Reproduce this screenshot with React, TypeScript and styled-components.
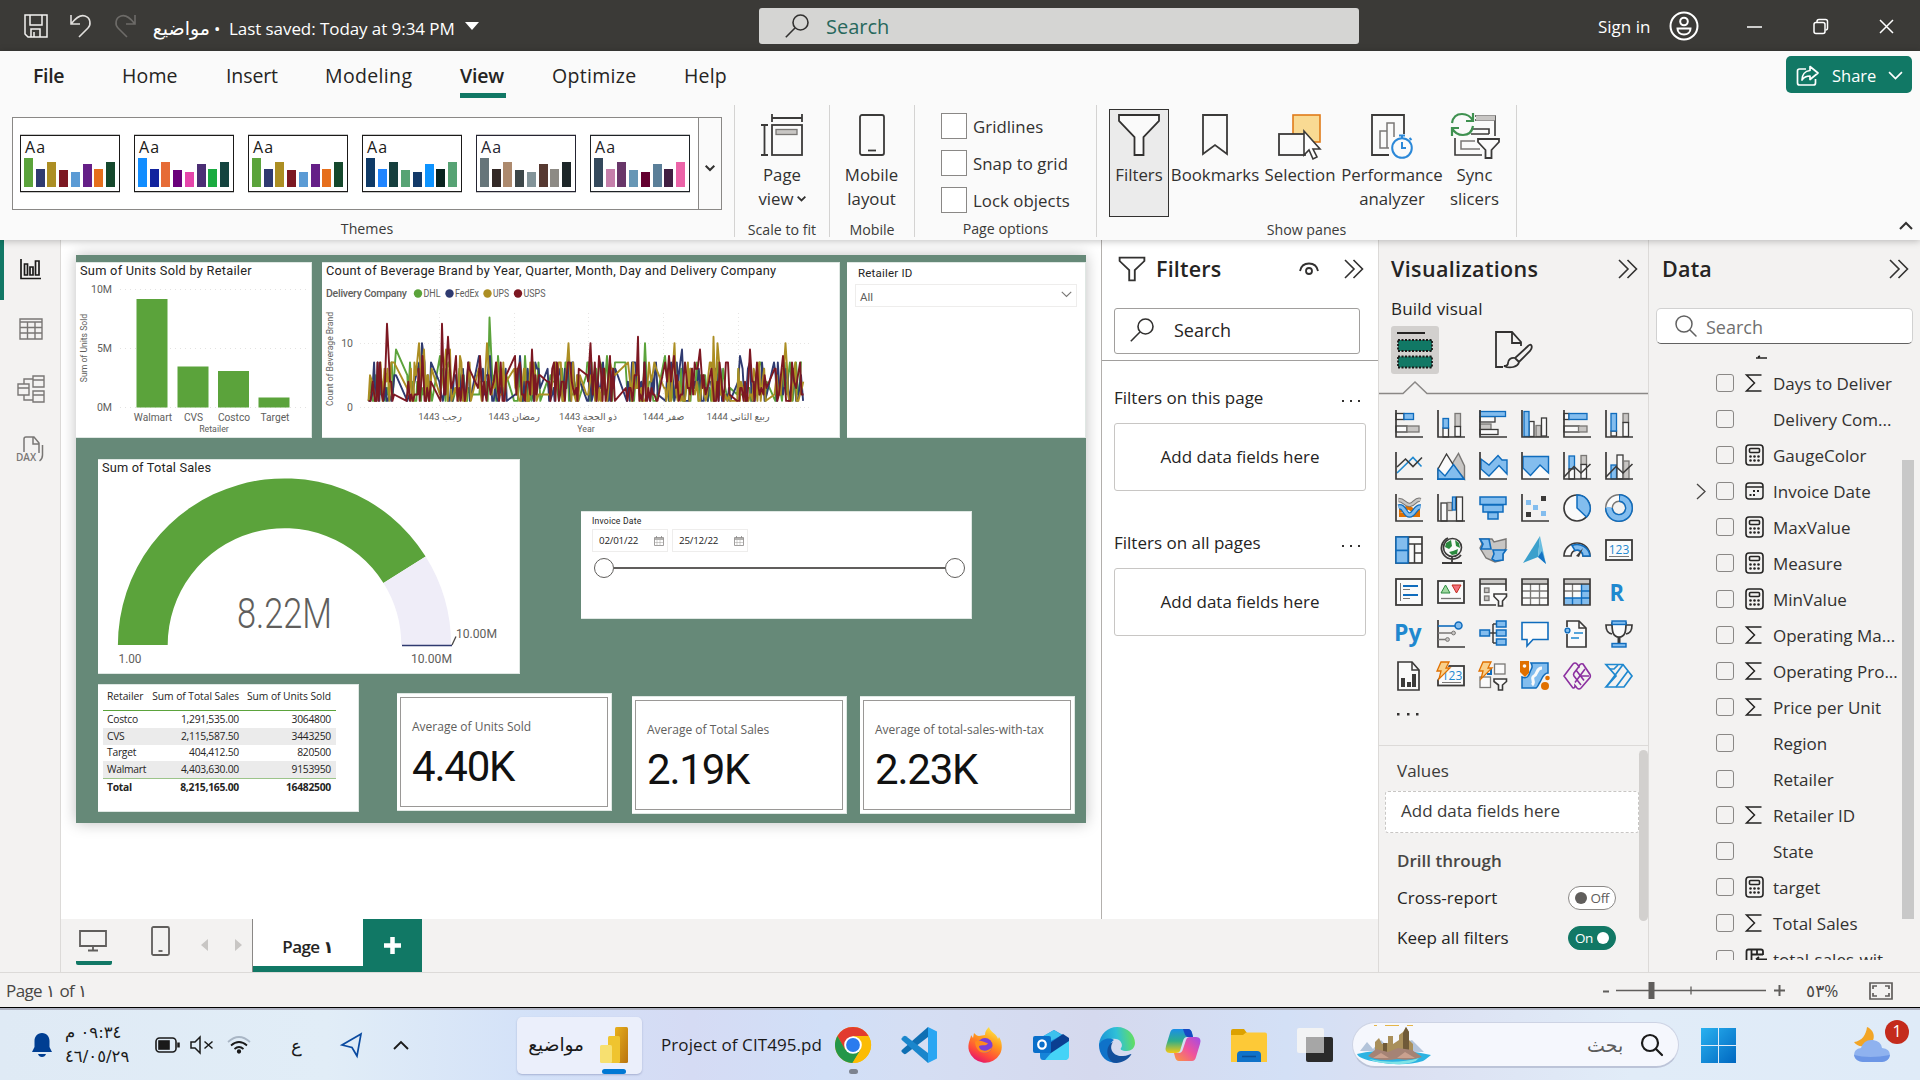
import React from "react";
import styled, { createGlobalStyle } from "styled-components";

const UI = '"Open Sans", "Noto Sans", "DejaVu Sans", sans-serif';
const DIN = 'Roboto, "DejaVu Sans", sans-serif';
const TEAL = "#117865";

const Global = createGlobalStyle`
  * { box-sizing: border-box; }
  body { margin: 0; overflow: hidden; font-family: ${UI}; color: #252423; }
  svg { display: block; flex: none; overflow: visible; }
`;

const Screen = styled.div`
  width: 1920px;
  height: 1080px;
  display: flex;
  flex-direction: column;
  overflow: hidden;
  background: #f3f2f1;
`;

const Label = styled.span<{ $size?: number; $ls?: number; $weight?: number; $color?: string; $w?: number; $ml?: number; $dy?: number }>`
  display: block;
  flex: none;
  white-space: nowrap;
  font-size: ${p => p.$size ?? 17}px;
  line-height: 24px;
  letter-spacing: ${p => p.$ls ?? 0}px;
  font-weight: ${p => p.$weight ?? 400};
  color: ${p => p.$color ?? "inherit"};
  margin-left: ${p => p.$ml ?? 0}px;
  padding-top: ${p => Math.max(0, p.$dy ?? 0)}px;
  width: ${p => (p.$w ? `${p.$w}px` : "auto")};
`;

/* ---------- title bar ---------- */
const TitleBar = styled.header`
  height: 51px;
  flex: none;
  display: flex;
  align-items: center;
  background: #3b3a37;
  color: #fff;
  padding-left: 24px;
`;
const QuickIcons = styled.div`
  display: flex;
  gap: 22px;
  width: 126px;
`;
const TitleSearch = styled.div`
  width: 600px;
  height: 36px;
  margin-left: 280px;
  border-radius: 3px;
  background: #d5d5d3;
  display: flex;
  align-items: center;
  padding-left: 26px;
  gap: 17px;
  color: #27685c;
`;
const WindowButtons = styled.div`
  display: flex;
  align-items: center;
  gap: 51px;
  margin-left: 48px;
`;

/* ---------- ribbon ---------- */
const Ribbon = styled.section`
  height: 189px;
  flex: none;
  background: #fafafa;
  display: flex;
  flex-direction: column;
  box-shadow: 0 1px 7px rgba(0, 0, 0, 0.25);
  z-index: 2;
`;
const TabRow = styled.nav`
  height: 54px;
  display: flex;
  align-items: flex-start;
  padding: 5px 8px 0 33px;
`;
const Tab = styled.div<{ $w: number; $gap: number; $active?: boolean; $bold?: boolean; $ls?: number }>`
  width: ${p => p.$w}px;
  margin-right: ${p => p.$gap}px;
  height: 42px;
  padding-top: 7px;
  white-space: nowrap;
  font-size: 19.5px;
  line-height: 26px;
  letter-spacing: ${p => p.$ls ?? 0.15}px;
  font-weight: ${p => (p.$active || p.$bold ? 600 : 400)};
  border-bottom: 5px solid ${p => (p.$active ? TEAL : "transparent")};
`;
const Share = styled.button`
  margin-left: auto;
  width: 126px;
  height: 37px;
  border: 0;
  border-radius: 5px;
  background: ${TEAL};
  color: #fff;
  display: flex;
  align-items: center;
  padding: 2px 12px 0 10px;
  font: 400 16.5px ${UI};
  gap: 12px;
`;
const Groups = styled.div`
  display: flex;
  height: 132px;
`;
const Group = styled.div<{ $w: number }>`
  width: ${p => p.$w}px;
  flex: none;
  border-right: 1px solid #d4d3d2;
  display: flex;
  flex-direction: column;
`;
const GroupBody = styled.div<{ $pad?: string }>`
  height: 112px;
  display: flex;
  padding: ${p => p.$pad ?? "4px 0 0"};
`;
const GroupName = styled.div`
  text-align: center;
  font-size: 14.2px;
  line-height: 20px;
  height: 20px;
  margin-top: 1px;
  color: #3b3a39;
  padding-top: 2px;
`;
const Gallery = styled.div`
  width: 710px;
  height: 93px;
  border: 1px solid #8a8886;
  background: #fff;
  display: flex;
  align-items: center;
  padding-left: 7px;
  gap: 14px;
`;
const ThemeCard = styled.div<{ $ink: string }>`
  width: 100px;
  height: 57px;
  border: 1.5px solid ${p => p.$ink};
  box-shadow: 0 1px 0 #c8c8c8, 0 -1px 0 #c8c8c8;
  background: #fff;
  color: ${p => p.$ink};
  padding: 3px 4px 4px;
  display: flex;
  flex-direction: column;
  justify-content: space-between;
  font-size: 16px;
  line-height: 16px;
  letter-spacing: 1.2px;
`;
const MiniBars = styled.div`
  display: flex;
  align-items: flex-end;
  gap: 2.8px;
  margin-left: -1px;
`;
const MiniBar = styled.i<{ $h: number; $c: string }>`
  width: 9px;
  height: ${p => p.$h}px;
  background: ${p => p.$c};
`;
const GalleryMore = styled.div`
  margin-left: -6px;
  width: 24px;
  height: 91px;
  border-left: 1px solid #8a8886;
  background: #fafafa;
  display: flex;
  align-items: center;
  justify-content: center;
  padding-top: 8px;
`;
const BigButton = styled.div<{ $w: number; $active?: boolean }>`
  width: ${p => p.$w}px;
  height: 108px;
  flex: none;
  border: 1px solid ${p => (p.$active ? "#323130" : "transparent")};
  background: ${p => (p.$active ? "#ebebeb" : "transparent")};
  display: flex;
  flex-direction: column;
  align-items: center;
  white-space: nowrap;
  font-size: 16.8px;
  line-height: 24px;
  color: #323130;
  padding-top: 4px;
  > svg { margin-bottom: 7px; }
`;
const CheckList = styled.div`
  display: flex;
  flex-direction: column;
  gap: 13px;
  padding: 5px 0 0 26px;
`;
const CheckRow = styled.div`
  display: flex;
  align-items: center;
  gap: 6px;
  height: 24px;
  font-size: 16.8px;
  letter-spacing: 0.05px;
  white-space: nowrap;
  color: #323130;
  &::before { content: ""; width: 24px; height: 24px; border: 1px solid #8a8886; background: #fff; }
`;
const CollapseSlot = styled.div`
  flex: 1;
  display: flex;
  justify-content: flex-end;
  align-items: flex-end;
  padding: 0 7px 7px 0;
`;

/* ---------- workspace ---------- */
const Work = styled.main`
  height: 732px;
  flex: none;
  display: flex;
`;
const Rail = styled.aside`
  width: 61px;
  flex: none;
  border-right: 1px solid #dcdad8;
  background: #f3f2f1;
`;
const RailItem = styled.div<{ $active?: boolean }>`
  height: 60px;
  display: flex;
  align-items: center;
  justify-content: center;
  border-left: 4px solid ${p => (p.$active ? TEAL : "transparent")};
  padding: 0 3px 2px 0;
`;
const Center = styled.div`
  width: 1317px;
  flex: none;
  display: flex;
  flex-direction: column;
`;
const CenterTop = styled.div`
  height: 679px;
  display: flex;
`;
const Canvas = styled.div`
  width: 1040px;
  background: #fff;
  padding: 15px 0 0 15px;
`;
const Report = styled.div`
  position: relative;
  width: 1010px;
  height: 568px;
  background: #668978;
  box-shadow: 0 0 14px rgba(0, 0, 0, 0.25);
`;
const Visual = styled.div<{ $x: number; $y: number; $w: number; $h: number }>`
  position: absolute;
  left: ${p => p.$x - 76}px;
  top: ${p => p.$y - 255}px;
  width: ${p => p.$w}px;
  height: ${p => p.$h}px;
  background: #fff;
  overflow: hidden;
  border: 1px solid #dfe7e3;
  border-width: 1px 1px 1px 0;
`;
const VisualTitle = styled.div<{ $ls?: number }>`
  font: 400 12.8px/16px ${DIN};
  letter-spacing: ${p => p.$ls ?? 0.25}px;
  white-space: nowrap;
  height: 16px;
  padding-left: 4px;
`;
const SlicerBody = styled.div`
  padding: 2px 8px 0 8px;
`;
const SlicerTitle = styled.div<{ $size: number; $h: number }>`
  font: 400 ${p => p.$size}px/${p => p.$h}px ${DIN};
  letter-spacing: 0.2px;
  padding-left: 3px;
  white-space: nowrap;
`;
const Dropdown = styled.div`
  height: 23px;
  margin-top: 3px;
  border: 1px solid #eeedec;
  display: flex;
  align-items: center;
  justify-content: space-between;
  padding: 3px 4px 0 4px;
  font: 400 11.5px ${DIN};
  color: #605e5c;
  > svg { margin-top: -5px; }
`;
const DateRow = styled.div`
  display: flex;
  gap: 4px;
  padding-left: 3px;
`;
const DateBox = styled.div`
  width: 76px;
  height: 23px;
  border: 1px solid #eeedec;
  display: flex;
  align-items: center;
  justify-content: space-between;
  padding: 0 3px 0 6px;
  font: 400 9.8px "Open Sans", sans-serif;
  letter-spacing: -0.2px;
`;
const Slider = styled.div`
  display: flex;
  align-items: center;
  margin: 5px -2px 0 5px;
  height: 22px;
`;
const Knob = styled.i`
  width: 20px;
  height: 20px;
  border: 1.5px solid #605e5c;
  border-radius: 50%;
`;
const Track = styled.i`
  flex: 1;
  height: 2px;
  background: #605e5c;
`;
const Table = styled.div`
  padding: 0 0 0 5px;
  width: 238px;
`;
const TRow = styled.div<{ $kind?: "head" | "alt" | "total" }>`
  display: grid;
  grid-template-columns: 46px 94px 92px;
  height: ${p => (p.$kind === "head" ? 26 : 16.8)}px;
  padding-bottom: ${p => (p.$kind === "head" ? 3 : 1)}px;
  align-items: center;
  background: ${p => (p.$kind === "alt" ? "#ebebeb" : "transparent")};
  border-bottom: ${p => (p.$kind === "head" ? "1px solid #5ba33b" : "0")};
  border-top: ${p => (p.$kind === "total" ? "1px solid #9cc48a" : "0")};
  font-size: 10.3px;
  letter-spacing: ${p => (p.$kind === "head" ? -0.05 : -0.25)}px;
  font-weight: ${p => (p.$kind === "total" ? 700 : 400)};
  color: #252423;
  white-space: nowrap;
  span:first-child { padding-left: 4px; text-align: left; }
  span { text-align: right; padding-right: 4px; }
`;
const CardFrame = styled.div`
  margin: 3px;
  height: calc(100% - 6px);
  border: 1px solid #9a9896;
  padding: 19px 0 0 11px;
`;
const CardLabel = styled.div`
  font-size: 12px;
  line-height: 20px;
  color: #605e5c;
  white-space: nowrap;
`;
const CardValue = styled.div`
  font: 400 42px/48px ${DIN};
  letter-spacing: -1.2px;
  color: #111;
  margin-top: 6px;
  white-space: nowrap;
`;

/* filters pane */
const FiltersPane = styled.section`
  width: 277px;
  flex: none;
  background: #fff;
  border-left: 1px solid #b3b0ad;
`;
const PaneHead = styled.div<{ $pad: string }>`
  height: 60px;
  display: flex;
  align-items: center;
  padding: ${p => p.$pad};
`;
const Push = styled.div`
  margin-left: auto;
  display: flex;
  align-items: center;
  gap: 25px;
`;
const FilterTop = styled.div`
  height: 61px;
  padding: 8px 0 0 12px;
  border-bottom: 1px solid #a19f9d;
`;
const FilterSearch = styled.div`
  width: 246px;
  height: 46px;
  border: 1px solid #a19f9d;
  border-radius: 3px;
  display: flex;
  align-items: center;
  padding: 0 0 2px 15px;
  gap: 20px;
`;
const FilterSection = styled.div`
  height: 145px;
  padding: 23px 12px 0 12px;
`;
const FilterHead = styled.div`
  display: flex;
  justify-content: space-between;
  align-items: center;
  height: 27px;
  padding-right: 6px;
`;
const DropWell = styled.div`
  margin-top: 12px;
  height: 68px;
  border: 1px solid #c8c6c4;
  border-radius: 3px;
  display: flex;
  align-items: center;
  justify-content: center;
`;

/* page tabs */
const PageBar = styled.div`
  height: 53px;
  display: flex;
  background: #f3f2f1;
`;
const ViewSwitch = styled.div`
  width: 192px;
  display: flex;
  align-items: flex-start;
  border-right: 1px solid #8a8886;
  padding-left: 15px;
`;
const DesktopTab = styled.div`
  width: 36px;
  height: 46px;
  padding: 11px 0 0 3px;
  border-bottom: 4px solid ${TEAL};
  border-radius: 2px;
`;
const PageTab = styled.div`
  width: 110px;
  background: #fff;
  border-bottom: 6px solid ${TEAL};
  display: flex;
  align-items: center;
  justify-content: center;
  font-size: 17px;
  font-weight: 600;
  letter-spacing: -0.6px;
  padding-top: 7px;
`;
const AddPage = styled.div`
  width: 59px;
  background: ${TEAL};
  display: flex;
  align-items: center;
  justify-content: center;
`;

/* visualizations pane */
const VizPane = styled.section`
  width: 271px;
  flex: none;
  background: #f3f2f1;
  border-left: 1px solid #dcdad8;
  border-right: 1px solid #dcdad8;
  display: flex;
  flex-direction: column;
`;
const BuildTitle = styled.div`
  height: 24px;
  margin: -3px 0 3px 12px;
  font-size: 17px;
  line-height: 24px;
  letter-spacing: 0.15px;
  font-weight: 500;
`;
const BuildRow = styled.div`
  display: flex;
  padding: 0 0 0 12px;
  height: 55px;
  margin-top: 2px;
  align-items: flex-start;
`;
const BuildButton = styled.div`
  width: 48px;
  height: 48px;
  border-radius: 3px;
  background: #d2d0ce;
  margin-right: 56px;
  padding: 6px;
`;
const IconGrid = styled.div`
  display: grid;
  grid-template-columns: repeat(6, 28px);
  grid-auto-rows: 28px;
  gap: 14px;
  padding: 15px 0 0 16px;
`;
const Wells = styled.div`
  display: flex;
  margin-top: auto;
  height: 227px;
  border-top: 1px solid #dcdad8;
`;
const WellsBody = styled.div`
  width: 260px;
  padding: 13px 0 0 6px;
`;
const ValueDrop = styled.div`
  width: 254px;
  height: 42px;
  margin-top: 8px;
  background: #fff;
  border: 1px dashed #c8c6c4;
  border-radius: 3px;
  display: flex;
  align-items: center;
  padding: 0 0 2px 15px;
`;
const OptionRow = styled.div<{ $mt?: number }>`
  display: flex;
  align-items: center;
  justify-content: space-between;
  height: 40px;
  margin-top: ${p => p.$mt ?? 0}px;
  padding: 0 23px 0 12px;
`;
const Toggle = styled.div<{ $on?: boolean }>`
  width: 48px;
  height: 24px;
  border-radius: 12px;
  border: 1px solid ${p => (p.$on ? TEAL : "#8a8886")};
  background: ${p => (p.$on ? TEAL : "#fff")};
  color: ${p => (p.$on ? "#fff" : "#605e5c")};
  display: flex;
  flex-direction: ${p => (p.$on ? "row-reverse" : "row")};
  align-items: center;
  justify-content: space-between;
  padding: 0 6px;
  font-size: 13.5px;
  letter-spacing: -0.4px;
  i { width: 12px; height: 12px; border-radius: 50%; background: ${p => (p.$on ? "#fff" : "#605e5c")}; }
`;
const Scroll = styled.i<{ $w: number; $h: number; $top: number; $round?: boolean; $c: string }>`
  flex: none;
  width: ${p => p.$w}px;
  height: ${p => p.$h}px;
  margin-top: ${p => p.$top}px;
  border-radius: ${p => (p.$round ? 5 : 0)}px;
  background: ${p => p.$c};
`;

/* data pane */
const DataPane = styled.section`
  flex: 1;
  background: #f3f2f1;
`;
const DataSearch = styled.div`
  width: 257px;
  height: 36px;
  margin: 8px 0 0 7px;
  border: 1px solid #d1d1d1;
  border-bottom: 1.5px solid #616161;
  border-radius: 5px;
  background: #fff;
  display: flex;
  align-items: center;
  padding-left: 18px;
  gap: 9px;
`;
const FieldArea = styled.div`
  display: flex;
  margin-top: 11px;
  height: 605px;
  overflow: hidden;
`;
const FieldList = styled.div`
  width: 253px;
  overflow: hidden;
`;
const Remnant = styled.div`
  height: 10px;
  padding: 0 0 0 107px;
`;
const Field = styled.div`
  height: 36px;
  display: grid;
  grid-template-columns: 20px 18px 20px 1fr;
  column-gap: 10px;
  padding-left: 37px;
  align-items: center;
  font-size: 17px;
  white-space: nowrap;
  color: #323130;
  span:last-child { margin-left: -1px; }
  svg { margin-left: 1px; }
`;
const Box = styled.i`
  width: 18px;
  height: 18px;
  border: 1px solid #8a8886;
  border-radius: 3px;
`;
const Expander = styled.div`
  padding-left: 9px;
`;

/* status bar */
const Status = styled.footer`
  height: 38px;
  flex: none;
  display: flex;
  align-items: center;
  background: #f3f2f1;
  border-top: 1px solid #dcdad8;
  border-bottom: 2px solid #aeb3c2;
  box-shadow: inset 0 -1px 0 #000;
  padding: 0 27px 0 6px;
  color: #484644;
`;
const ZoomGroup = styled.div`
  margin-left: auto;
  display: flex;
  align-items: center;
  gap: 20px;
`;

/* taskbar */
const Taskbar = styled.footer`
  height: 70px;
  flex: none;
  display: flex;
  align-items: center;
  background: linear-gradient(90deg, #dfeaf5 0, #e1edf7 17%, #d3e1f8 28%, #d5dbf4 36%, #d1dff7 43%, #d5def3 48%, #d5d9ee 57%, #d3e0f6 67%, #dbe0f2 73%, #e1ecf8 85%, #dfebf8 100%);
  color: #1a1a1a;
`;
const Slot = styled.div<{ $w: number; $pl?: number; $clip?: boolean }>`
  width: ${p => p.$w}px;
  padding-left: ${p => p.$pl ?? 0}px;
  overflow: ${p => (p.$clip ? "hidden" : "visible")};
  flex: none;
  display: flex;
  align-items: center;
`;
const ViewLine = styled.div`
  display: flex;
  align-items: center;
  gap: 3px;
  height: 24px;
`;
const Clock = styled.div`
  width: 66px;
  direction: rtl;
  text-align: left;
  font: 400 16.5px/24px "DejaVu Sans", sans-serif;
  white-space: nowrap;
  letter-spacing: -0.5px;
  div { display: flex; justify-content: flex-end; }
`;
const AppButton = styled.div`
  width: 125px;
  height: 57px;
  border-radius: 5px;
  background: #ebeffb;
  box-shadow: 0 1px 2px rgba(80, 90, 140, 0.35);
  display: flex;
  align-items: flex-start;
  padding: 10px 14px 0 9px;
  justify-content: space-between;
`;
const AppMark = styled.div<{ $c: string; $w: number; $t: number; $mt?: number }>`
  display: flex;
  flex-direction: column;
  align-items: center;
  margin-top: ${p => p.$mt ?? 0}px;
  &::after { content: ""; width: ${p => p.$w}px; height: 5px; margin-top: ${p => p.$t}px; border-radius: 3px; background: ${p => p.$c}; }
`;
const SearchPill = styled.div`
  width: 327px;
  height: 46px;
  margin-left: -1px;
  border-radius: 23px;
  background: #f5f7fd;
  border: 1px solid #cdd3e4;
  border-bottom: 2px solid #bcc4d8;
  display: flex;
  align-items: center;
  padding: 0 16px 0 4px;
`;
const Badge = styled.div`
  position: absolute;
  right: -19px;
  top: -7px;
  width: 24px;
  height: 24px;
  border-radius: 50%;
  background: #c42b1c;
  color: #fff;
  font-size: 16px;
  line-height: 23px;
  text-align: center;
`;
const Weather = styled.div`
  position: relative;
  width: 36px;
`;

/* ---------- small icons ---------- */
const Magnifier = ({ c = "#323130", s = 24, w = 1.6 }: { c?: string; s?: number; w?: number }) => (
  <svg width={s} height={s} viewBox="0 0 24 24" fill="none" stroke={c} strokeWidth={w}>
    <circle cx="15.5" cy="8.5" r="7.5" /><path d="M10 14L.8 23.2" />
  </svg>
);
const MagnifierR = ({ c, s, w }: { c: string; s: number; w: number }) => (
  <svg width={s} height={s} viewBox="0 0 22 22" fill="none" stroke={c} strokeWidth={w} strokeLinecap="round">
    <circle cx="9" cy="9" r="8" /><path d="M15 15l6 6" />
  </svg>
);
const DoubleChevron = () => (
  <svg width="20" height="20" viewBox="0 0 20 20" fill="none" stroke="#323130" strokeWidth="1.6"><path d="M1 1l9 9-9 9M9.500 1l9 9-9 9" /></svg>
);
const Funnel = ({ w, h, sw, fill = "none" }: { w: number; h: number; sw: number; fill?: string }) => (
  <svg width={w} height={h} viewBox="0 0 42 42" preserveAspectRatio="none" fill={fill} stroke="#323130" strokeWidth={sw}>
    <path d="M1 1H41V7L25.500 23V41H16.500V23L1 7Z" />
  </svg>
);
const Down = ({ s = 10, c = "#323130", w = 2 }: { s?: number; c?: string; w?: number }) => (
  <svg width={s} height={s * 0.6} viewBox="0 0 10 6" fill="none" stroke={c} strokeWidth={w}><path d="M.7.7L5 5 9.300.7" /></svg>
);

/* ---------- visual type icons, 28 x 28 ---------- */
const B = "#83bdee", b = "#0f6cbd", K = "#3b3a39", G = "#c8c6c4", g = "#797775", W = "#fafafa", P = "#1f88cf", O = "#e07000";
const Axis = () => <path d="M1 0V27H28" fill="none" stroke={K} strokeWidth="1.7" />;
type Bx = [string, number, number, number, number];
const tone: Record<string, [string, string]> = { b: [B, b], w: [W, K], g: [G, g], o: ["#f9d08b", O], v: [W, g] };
const Boxes = ({ d, sw = 1.3 }: { d: Bx[]; sw?: number }) => (
  <>{d.map(([t, x, y, w, h], i) => <rect key={i} x={x} y={y} width={w} height={h} fill={tone[t][0]} stroke={tone[t][1]} strokeWidth={sw} />)}</>
);
const Bolt = () => <path d="M4 0h8L9 6h4L2 17l2-8H0z" fill="#f9d08b" stroke={O} strokeWidth="1.3" />;

const vizIcons: React.ReactNode[] = [
  <><Boxes d={[["w", 1, 3.5, 8, 6], ["b", 9, 3.5, 9.5, 6], ["w", 1, 16, 11, 6], ["g", 12, 16, 12, 6]]} /><Axis /></>,
  <><Boxes d={[["w", 6, 18, 5.500, 9], ["b", 6, 8.500, 5.500, 9.500], ["g", 18, 3.500, 5.500, 13], ["w", 18, 16.500, 5.500, 10]]} /><Axis /></>,
  <><Boxes d={[["w", 1, 6.500, 15, 5.500], ["g", 1, 14, 11, 5.500], ["w", 1, 19.500, 18, 5], ["b", 1, 1.500, 25.500, 5]]} /><Axis /></>,
  <><Boxes d={[["w", 8, 11.500, 5, 15], ["g", 15, 15.500, 5, 11], ["w", 20.500, 8, 5, 18], ["b", 3, 1.500, 5, 25]]} /><Axis /></>,
  <><Boxes d={[["w", 1, 3.500, 5, 6], ["b", 6, 3.500, 18, 6], ["w", 1, 16, 15, 6], ["g", 15.500, 16, 8.500, 6]]} /><Axis /></>,
  <><Boxes d={[["w", 6, 21, 5.500, 5], ["b", 6, 3.500, 5.500, 17.500], ["g", 18, 3.500, 5.500, 9], ["w", 18, 12.500, 5.500, 14]]} /><Axis /></>,
  <><path d="M2 21L18 5.500l8.500 9" fill="none" stroke={P} strokeWidth="1.6" /><path d="M2 15L10.500 7l7.500 7.500L27 5.500" fill="none" stroke={K} strokeWidth="1.6" /><Axis /></>,
  <><path d="M15 12L21.500 1.500 27.500 14V27L16 13z" fill={G} stroke={g} strokeWidth="1.400" /><path d="M1 17L9.500 2 22 22v5H1z" fill={W} stroke={K} strokeWidth="1.400" /><path d="M1 17l7 7 8.500-11.500L27 27H1z" fill={B} stroke={b} strokeWidth="1.400" /><path d="M0 27.300H28" stroke={b} strokeWidth="1.400" /></>,
  <><path d="M2 20l8 5.500L19 14l8 9v4H2z" fill={W} /><path d="M2 7l8 6 9-9.500 4 4.500h5v14l-8-8.500-10 10.500-8-7z" fill={B} stroke={b} strokeWidth="1.400" /><Axis /></>,
  <><path d="M2 17l7 7L19 13l9 9v5H2z" fill={W} /><path d="M2 4.500H27.500V21L19 13 9.500 23.500 2 16z" fill={B} stroke={b} strokeWidth="1.400" /><Axis /></>,
  <><Boxes d={[["b", 6, 4, 5.500, 13], ["w", 6, 17, 5.500, 10], ["g", 18, 3.500, 5.500, 9], ["w", 18, 12.500, 5.500, 14]]} /><path d="M1 25L11 14.500l7 6.500L27.500 12" fill="none" stroke={K} strokeWidth="1.600" /><Axis /></>,
  <><Boxes d={[["b", 6, 13, 5.500, 14], ["w", 12, 3, 6, 24], ["g", 18.500, 9, 5.500, 18]]} /><path d="M1 25L11 14.500l7 6.500L27.500 12" fill="none" stroke={K} strokeWidth="1.600" /><Axis /></>,
  <><path d="M4 21h21M4 17c6 0 8-6 12-2s6 3 9 3" stroke={O} strokeWidth="4" fill="none" /><path d="M3.500 6c6 0 6 5 11 5s6-7 11-5" stroke={g} strokeWidth="4.500" fill="none" /><path d="M3.500 6c6 0 6 5 11 5s6-7 11-5" stroke={G} strokeWidth="2.500" fill="none" /><path d="M3.500 13c6-2 6 8 11 8s6-9 11-8" stroke={b} strokeWidth="5.500" fill="none" /><path d="M3.500 13c6-2 6 8 11 8s6-9 11-8" stroke={B} strokeWidth="3" fill="none" /><Axis /></>,
  <><Boxes d={[["w", 4, 9, 6, 18], ["g", 10.500, 8.500, 4.500, 8], ["b", 15.500, 3, 3, 13], ["w", 19.500, 3, 6, 24]]} /><Axis /></>,
  <Boxes sw={1.500} d={[["b", 1, 3, 26, 7.500], ["b", 4, 11, 20, 7], ["b", 9, 18.500, 10, 6.500]]} />,
  <><Axis /><path d="M20 2h5v5h-5zM5 18h5v5H5z" fill={K} /><path d="M5 6h5v5H5zM12 11h5v5h-5zM20 17h5v5h-5z" fill={B} /></>,
  <><circle cx="14" cy="14" r="13" fill={W} stroke={K} strokeWidth="1.700" /><path d="M14 1a13 13 0 0 1 9.500 22L14 14z" fill={B} stroke={b} strokeWidth="1.500" /></>,
  <><circle cx="14" cy="14" r="10" fill="none" stroke={g} strokeWidth="8" /><circle cx="14" cy="14" r="10" fill="none" stroke={W} strokeWidth="5" /><path d="M14 4a10 10 0 1 1-10 10" fill="none" stroke={b} strokeWidth="8" /><path d="M15 4a10 10 0 1 1-11 9" fill="none" stroke={B} strokeWidth="5.200" /></>,
  <><rect x="1" y="1" width="26" height="26" fill={W} stroke={K} strokeWidth="1.700" /><path d="M13.500 8H27M19.500 8v19M19.500 17H27M13.500 1v26" stroke={K} strokeWidth="1.500" fill="none" /><Boxes d={[["b", 1, 1, 12, 13.500], ["b", 1, 14.500, 12, 12.500]]} sw={1.500} /></>,
  <><path d="M11 2a11 11 0 1 0 13 17M15 21v6M5 27h20" fill="none" stroke={K} strokeWidth="1.800" /><circle cx="15.500" cy="11.500" r="9" fill={W} stroke={K} strokeWidth="1.600" /><path d="M14 4l-5 3-1 4 4 2 3-3zM18 4l4 3 1 5-4-2zM12 16l4-1 5-2-1 5-5 1z" fill="#2b8a3e" /></>,
  <><path d="M1 3h12l2 3 12-3v9l-3 5v7l-8 2-9-4-6-10 2-4z" fill={G} stroke={g} strokeWidth="1.400" /><path d="M1 3h9l2 10H2l2-5zM14 14h13l-3 4v6l-8 1-3-2 2-5z" fill={B} stroke={b} strokeWidth="1.600" /></>,
  <><path d="M19 0L2 27l15-6z" fill="#3ba0cc" /><path d="M19 0L25 28l-8-7z" fill="#69bde0" /><path d="M17 21l8 7-4-13z" fill="#1573c4" /></>,
  <><path d="M1 20a13 13 0 0 1 26 0h-7a6 6 0 0 0-12 0z" fill={W} stroke={K} strokeWidth="1.700" /><path d="M9 9.500A13 13 0 0 1 27 20h-7a6 6 0 0 0-8-5.500z" fill={B} stroke={b} strokeWidth="1.500" /><path d="M20 12l-4 9-3-1z" fill={K} /></>,
  <><rect x="1" y="4" width="26" height="20" fill={W} stroke={K} strokeWidth="1.800" /><text x="14" y="17.500" textAnchor="middle" fontSize="12" fill={P}>123</text><path d="M4 20.500h20" stroke={g} /></>,
  <><rect x="1" y="1" width="26" height="26" fill={W} stroke={K} strokeWidth="1.800" /><path d="M5.500 5v18" stroke={g} /><path d="M8 8h15M8 17h15" stroke={b} strokeWidth="2" /><path d="M8 11.500h7M8 20.500h7" stroke={g} /></>,
  <><rect x="1" y="3" width="26" height="22" fill={W} stroke={K} strokeWidth="1.800" /><path d="M8.500 7l4.500 8H4z" fill="#9fd89f" stroke="#2b8a3e" /><path d="M19.500 15L24 7h-9z" fill="#f1707b" stroke="#c42b1c" /><path d="M4 20.500h20" stroke={g} strokeWidth="1.300" /></>,
  <><rect x="1" y="1" width="26" height="25" fill={W} /><path d="M1 1h26v4.500H1z" fill={G} /><path d="M27 13V1H1v26h16M1 6h26" fill="none" stroke={K} strokeWidth="1.700" /><Boxes d={[["g", 5.500, 10, 4.500, 4.500], ["g", 5.500, 18, 4.500, 4.500]]} /><path d="M15 16h12.500v2.500L23.500 23v5h-4v-5L15 18.500z" fill={W} stroke={K} strokeWidth="1.600" /></>,
  <><rect x="1" y="1" width="26" height="26" fill={W} /><path d="M1 1h26v4H1z" fill={G} /><path d="M1 13h26M1 20h26M9.500 6v21M18.500 6v21" stroke={g} strokeWidth="1.300" /><path d="M1 1h26v26H1zM1 6h26" fill="none" stroke={K} strokeWidth="1.700" /></>,
  <><rect x="1" y="1" width="26" height="26" fill={W} /><path d="M1 1h26v4H1z" fill={G} /><path d="M18.500 6H27v21H1v-7h17.500z" fill={B} /><path d="M1 13h17M9.500 6v14" stroke={g} strokeWidth="1.300" /><path d="M18.500 6v21M1 20h26M18.500 13H27M9.500 20v7" stroke={b} strokeWidth="1.400" /><path d="M1 1h26v26H1zM1 6h26" fill="none" stroke={K} strokeWidth="1.700" /></>,
  <text x="4.500" y="23" fontSize="23" fontWeight="700" fill={P} textLength="14.500" lengthAdjust="spacingAndGlyphs">R</text>,
  <text x="-1" y="20.500" fontSize="23" fontWeight="700" fill={P}>Py</text>,
  <><Axis /><path d="M1 6h18" stroke={b} strokeWidth="1.600" /><circle cx="21.500" cy="5.500" r="3.500" fill={B} stroke={b} strokeWidth="1.500" /><path d="M1 13h14M1 19.500h8" stroke={g} strokeWidth="1.400" /><circle cx="16.500" cy="13" r="1.900" fill={G} stroke={g} /><circle cx="10.500" cy="19.500" r="1.900" fill={G} stroke={g} /></>,
  <><path d="M11 13h7M14 4v19M14 4h4M14 23h4" stroke={K} strokeWidth="1.500" fill="none" /><Boxes sw={1.500} d={[["b", 1, 10, 9.500, 6], ["b", 17.500, 1, 9.500, 6], ["b", 17.500, 10, 9.500, 6], ["b", 17.500, 19, 9.500, 6]]} /></>,
  <path d="M1 2.500h26v17H12L6 26v-6.500H1z" fill={W} stroke={b} strokeWidth="1.600" />,
  <><path d="M4 7V1h12l7 7v19H4V14" fill={W} stroke={K} strokeWidth="1.700" /><path d="M16 1v7h7" fill="none" stroke={K} strokeWidth="1.500" /><circle cx="4.500" cy="10.500" r="2.400" fill={B} stroke={b} strokeWidth="1.400" /><path d="M11 13h9M8 18h8" stroke={P} strokeWidth="1.400" /></>,
  <><path d="M7 5H1c0 5 1 8 6 9M21 5h6c0 5-1 8-6 9" fill="none" stroke={K} strokeWidth="1.700" /><path d="M7 3h14c0 9-1 14-7 14S7 12 7 3z" fill={W} stroke={K} strokeWidth="1.700" /><path d="M14 17v6" stroke={K} strokeWidth="3" /><Boxes sw={1.400} d={[["b", 7, 1, 14, 3.500], ["b", 7, 23.500, 14, 3.500]]} /></>,
  <><path d="M3 0h14l7 8v20H3z" fill={W} stroke={K} strokeWidth="1.700" /><path d="M17 0v8h7" fill="none" stroke={K} strokeWidth="1.500" /><path d="M6 16h4v9H6zM12 20h4v5h-4zM17 12h4v13h-4z" fill={K} /></>,
  <><rect x="1" y="4" width="26" height="19.500" fill={W} stroke={K} strokeWidth="1.800" /><text x="15" y="18" textAnchor="middle" fontSize="12" fill={P}>123</text><path d="M5 20.500h19" stroke={g} /><path d="M-1 -1h14L11 5 0 18z" fill="#f3f2f1" /><Bolt /></>,
  <><Boxes d={[["v", 15.500, 2, 10.500, 10], ["v", 1, 15, 10.500, 10.500]]} /><path d="M8 12h4V6" fill="none" stroke={b} strokeWidth="2" /><Bolt /><path d="M15 17h12.500v2.500L23.500 23v5h-4v-5L15 19.500z" fill={W} stroke={K} strokeWidth="1.600" /></>,
  <><path d="M10 1h17v10c-5 0-6 6-8 9s-2 5-4 6H1V15c5 2 7-1 8-5s4-4 1-9z" fill={B} stroke={b} strokeWidth="1.500" /><path d="M21 6c-6 0-4 6-8 8s2 6-2 9" stroke={W} strokeWidth="3" fill="none" /><path d="M-1 -1h9v12l-4 4-5-5z" fill={O} /><circle cx="3.500" cy="4" r="1.800" fill={W} /><circle cx="24" cy="24" r="4" fill={O} /><circle cx="26.500" cy="16" r="2.300" fill={O} /></>,
  <g fill="none" stroke="#8b2fa0" strokeWidth="1.600"><path d="M1 14L10 2q1-1 2-1t2 1l2 2.500q1-3.500 4-2.500L27 12.500q.8 1.500 0 3L18 26q-2 2-4 0l-2-2.500Q12 27 9.500 25.500z" /><path d="M16 4.500L11 11q-1 1.500 0 3l7 9M22 7L12 20.500M13 8l8 10.500M16 14h10" /></g>,
  <g fill="none" stroke={P} strokeWidth="1.700"><path d="M1 2.500h17L27 14l-8 11H1L11 14z" /><path d="M18 2.500L2 24M23 9L11 25M5 7h4l4-4" /></g>,
];

/* ---------- charts ---------- */
const AxisText = styled.text<{ $size?: number; $weight?: number }>`
  font: ${p => p.$weight ?? 400} ${p => p.$size ?? 10.5}px ${DIN};
  fill: #605e5c;
`;

const BarChart = () => {
  const bars: [string, number, number, number][] = [["Walmart", 136.500, 31, 299], ["CVS", 177.500, 31, 366.500], ["Costco", 218, 31, 371], ["Target", 258.500, 31, 397.500]];
  return (
    <svg width="234" height="158" viewBox="76 279 234 158">
      {[289.500, 348.500, 407.500].map(y => <path key={y} d={`M120 ${y}H307`} stroke="#e3e2e1" strokeDasharray="1 4" />)}
      {bars.map(([n, x, w, y], i) => (
        <g key={n}><rect x={x} y={y} width={w} height={407.500 - y} fill="#5ba33b" /><AxisText x={[153, 193.500, 234, 275][i]} y="420.500" textAnchor="middle" $size={10.200}>{n}</AxisText></g>
      ))}
      <AxisText x="112" y="292.500" textAnchor="end">10M</AxisText>
      <AxisText x="112" y="352" textAnchor="end">5M</AxisText>
      <AxisText x="112" y="411" textAnchor="end">0M</AxisText>
      <AxisText x="214" y="432" textAnchor="middle" $size={8.800}>Retailer</AxisText>
      <AxisText transform="translate(87 348) rotate(-90)" textAnchor="middle" $size={8.600}>Sum of Units Sold</AxisText>
    </svg>
  );
};

const random = (seed: number) => () => {
  seed = (seed * 1664525 + 1013904223) % 4294967296;
  return seed / 4294967296;
};
const quietGaps = [[396, 406], [432, 439], [471, 478], [507, 514], [541, 547], [579, 586], [616, 625], [658, 664], [731, 737], [767, 774]];
const trace = (seed: number, peaks: [number, number][]) => {
  const r = random(seed);
  const pts: [number, number][] = [];
  for (let x = 368.500; x < 804; x += 0.900 + r() * 1.300) {
    if (quietGaps.some(q => x > q[0] && x < q[1])) continue;
    if (peaks.some(q => Math.abs(q[0] - x) < 1.300)) continue;
    pts.push([x, 1 + Math.floor(Math.pow(r(), 1.700) * 7)]);
  }
  pts.push(...peaks);
  pts.sort((m, n) => m[0] - n[0]);
  return pts.map(([x, v]) => `${x.toFixed(1)},${(407.300 - v * 6.420).toFixed(1)}`).join(" ");
};
const series: [string, string][] = [
  ["#5ba33b", trace(11, [[396, 9], [410, 7], [440, 8], [489.500, 14], [498, 8], [525, 8], [607, 8], [615, 7], [645, 10], [665, 8], [762, 6], [796, 7]])],
  ["#2f3a70", trace(27, [[422, 10], [431, 7], [479, 8], [490, 8], [520, 8], [556, 7], [568, 8], [603, 7], [632, 7], [682, 9], [740, 8], [774, 7], [801, 5]])],
  ["#ac8e23", trace(35, [[394, 7], [419, 10], [424, 9], [446, 9], [450, 9], [460, 8], [487, 10], [555, 7], [568.500, 10], [580, 5], [591, 5], [628, 7], [649, 7], [674.500, 10], [713.500, 11], [717.500, 10], [785.500, 10]])],
  ["#7c1822", trace(62, [[380, 7], [387, 13], [422.500, 8], [442, 13], [448, 11], [456, 8], [480, 8], [496, 7], [515, 8], [532, 9], [554, 7], [570, 7], [590.500, 10], [599, 8], [610, 8], [638, 11], [669, 8], [674, 8], [685, 7], [700, 9], [728, 7], [750, 9], [757, 7], [783, 8], [792, 7]])],
];
const LineChart = () => (
  <svg width="517" height="158" viewBox="322 279 517 158">
    <AxisText x="326" y="297" $weight={500} textLength="81">Delivery Company</AxisText>
    {([["DHL", 418, "#5ba33b", 17], ["FedEx", 449.500, "#2f3a70", 24], ["UPS", 487.500, "#ac8e23", 16], ["USPS", 518, "#7c1822", 22]] as [string, number, string, number][]).map(([n, x, c, w]) => (
      <g key={n}><circle cx={x} cy="293.500" r="4.200" fill={c} /><AxisText x={x + 5.500} y="297" textLength={w} lengthAdjust="spacingAndGlyphs">{n}</AxisText></g>
    ))}
    <path d="M360 343.500H812M360 407.500H812M439.500 313V407M514.500 313V407M588.500 313V407M663.500 313V407M738.500 313V407" stroke="#e6e5e4" strokeDasharray="1 3" />
    {series.map(([c, d]) => <polyline key={c} points={d} fill="none" stroke={c} strokeWidth="1.900" strokeLinejoin="round" />)}
    <AxisText x="353" y="347" textAnchor="end">10</AxisText>
    <AxisText x="353" y="411" textAnchor="end">0</AxisText>
    {([["رجب 1443", 440], ["رمضان 1443", 514], ["ذو الحجة 1443", 588], ["صفر 1444", 663.500], ["ربيع الثاني 1444", 738]] as [string, number][]).map(([t, x]) => (
      <AxisText key={t} x={x} y="420" textAnchor="middle" direction="rtl" $size={9.500}>{t}</AxisText>
    ))}
    <AxisText x="586" y="432" textAnchor="middle" $size={8.800}>Year</AxisText>
    <AxisText transform="translate(333 359) rotate(-90)" textAnchor="middle" $size={8.600} textLength="94">Count of Beverage Brand</AxisText>
  </svg>
);

const arc = (from: number, to: number) => {
  const R = 166.600, r = 116.800, cx = 284.500, cy = 645;
  const p = (t: number, q: number) => `${(cx - q * Math.cos(Math.PI * t)).toFixed(2)} ${(cy - q * Math.sin(Math.PI * t)).toFixed(2)}`;
  return `M${p(from, R)}A${R} ${R} 0 0 1 ${p(to, R)}L${p(to, r)}A${r} ${r} 0 0 0 ${p(from, r)}Z`;
};
const GaugeText = styled.text<{ $size?: number; $weight?: number }>`
  font: ${p => p.$weight ?? 400} ${p => p.$size ?? 13.5}px ${DIN};
  fill: #605e5c;
`;
const Gauge = () => (
  <svg width="421" height="198" viewBox="98 476 421 198">
    <path d={arc(0, 0.8217)} fill="#5ba33b" />
    <path d={arc(0.8217, 1)} fill="#efedf8" />
    <path d="M402 645.500h50" stroke="#2f3a70" strokeWidth="1.500" />
    <path d="M452 645l4-8.500" stroke="#484644" strokeWidth="1.300" />
    <GaugeText x="284.500" y="628" textAnchor="middle" textLength="95" lengthAdjust="spacingAndGlyphs" $size={42} $weight={300}>8.22M</GaugeText>
    <GaugeText x="118.500" y="662.500" textLength="23" lengthAdjust="spacingAndGlyphs">1.00</GaugeText>
    <GaugeText x="411" y="662.500" textLength="41" lengthAdjust="spacingAndGlyphs">10.00M</GaugeText>
    <GaugeText x="456" y="637.500" textLength="41" lengthAdjust="spacingAndGlyphs">10.00M</GaugeText>
  </svg>
);

const Calendar = () => (
  <svg width="10" height="10" viewBox="0 0 10 10" fill="none" stroke="#8a8886"><path d="M.5 1.500h9v8h-9z" strokeWidth=".8" /><path d="M.5 3h9" strokeWidth="1.300" /><path d="M2.500 0v2M7.500 0v2" strokeWidth=".8" /><path d="M3 4v5M6 4v5M1 6.500h8" strokeWidth=".4" /></svg>
);

/* ---------- field list ---------- */
const Sigma = () => <svg width="18" height="18" viewBox="0 0 18 18" fill="none" stroke="#252423" strokeWidth="1.500"><path d="M16.500 1H1.500L9.500 9l-8 8h15" /></svg>;
const Calc = () => (
  <svg width="19" height="22" viewBox="0 0 19 22" fill="none" stroke="#252423" strokeWidth="1.600">
    <rect x="1" y="1" width="17" height="20" rx="3" /><rect x="4.500" y="4.500" width="10" height="4" rx="1" />
    <g fill="#252423" stroke="none">{[5.500, 9.500, 13.500].map(x => [12.500, 16.500].map(y => <circle key={x + "" + y} cx={x} cy={y} r="1.300" />))}</g>
  </svg>
);
const DateIcon = () => (
  <svg width="19" height="18" viewBox="0 0 19 18" fill="none" stroke="#252423" strokeWidth="1.500"><rect x="1" y="1" width="17" height="16" rx="3" /><path d="M1 5h17" /><path d="M8 9h2M12 9h2M4.500 13h2M8 13h2" strokeWidth="1.800" /></svg>
);
const CalcTable = () => (
  <svg width="22" height="22" viewBox="0 0 22 22" fill="none" stroke="#252423" strokeWidth="1.800"><path d="M18 7V3.500Q18 1.500 16 1.500H3.500Q1.500 1.500 1.500 3.500V20M6.500 1.500V20M6.500 6.500H18M12 1.500v5M11 11.500l3-2.500M11 11.500h11" /></svg>
);
const fields: [string, string][] = [
  ["s", "Days to Deliver"], ["", "Delivery Com..."], ["c", "GaugeColor"], ["d", "Invoice Date"], ["c", "MaxValue"], ["c", "Measure"], ["c", "MinValue"],
  ["s", "Operating Ma..."], ["s", "Operating Pro..."], ["s", "Price per Unit"], ["", "Region"], ["", "Retailer"], ["s", "Retailer ID"], ["", "State"], ["c", "target"], ["s", "Total Sales"], ["t", "total-sales-wit..."],
];
const fieldIcon: Record<string, React.ReactNode> = { s: <Sigma />, c: <Calc />, d: <DateIcon />, t: <CalcTable />, "": null };

const themes: [string, string[]][] = [
  ["#1b1a19", ["#5ba33b", "#2f3a70", "#ac8e23", "#7c1822", "#5b9bd5", "#651f87", "#e66f1c", "#15482c"]],
  ["#1b1a19", ["#118dff", "#12239e", "#e66c37", "#6b007b", "#e645ab", "#4b2e74", "#1aab40", "#14443f"]],
  ["#1b1a19", ["#5ba33b", "#2f3a70", "#ac8e23", "#7c1822", "#5b9bd5", "#651f87", "#e66f1c", "#15482c"]],
  ["#1b1a19", ["#0f3a66", "#1f85ff", "#163f3e", "#57a374", "#133a69", "#0d93ff", "#08231f", "#57a374"]],
  ["#252432", ["#66757a", "#332926", "#ad8a6e", "#3d4749", "#839499", "#573931", "#8d8a84", "#1d2628"]],
  ["#1e2226", ["#34495c", "#c57fab", "#683669", "#6797b5", "#640030", "#5b7f99", "#421f42", "#ec63a8"]],
];
const barHeights = [29, 18.500, 25.500, 17, 15, 23, 18.500, 25.500];

const rows: [string, string, string][] = [
  ["Costco", "1,291,535.00", "3064800"], ["CVS", "2,115,587.50", "3443250"], ["Target", "404,412.50", "820500"], ["Walmart", "4,403,630.00", "9153950"],
];
const cards: [number, number, string, string][] = [
  [397, 693, "Average of Units Sold", "4.40K"], [632, 695.500, "Average of Total Sales", "2.19K"], [860, 696, "Average of total-sales-with-tax", "2.23K"],
];

/* ---------- taskbar icons ---------- */
const Chrome = () => (
  <svg width="36" height="36" viewBox="0 0 36 36">
    <circle cx="18" cy="18" r="18" fill="#fbbc04" />
    <path d="M18 0a18 18 0 0 1 15.600 9H18L9.500 22 2.400 9A18 18 0 0 1 18 0z" fill="#e23b2e" />
    <path d="M2.400 9L10.200 22.500 18 27l-.5 9A18 18 0 0 1 2.400 9z" fill="#249749" /><path d="M17.500 36l8.300-13.500L18 26l-7.800-3.500z" fill="#249749" />
    <path d="M17.500 36L25.800 22.500A9 9 0 0 0 25 11.500L33.600 9A18 18 0 0 1 17.500 36z" fill="#fbbc04" />
    <circle cx="18" cy="18" r="8.800" fill="#fff" /><circle cx="18" cy="18" r="6.900" fill="#2a7bee" />
  </svg>
);
const VsCode = () => (
  <svg width="36" height="36" viewBox="0 0 36 36">
    <path d="M27 0L.8 23q-1 1 0 2l2 1.800q1 .8 2.200 0L27 10z" fill="#0f6fb3" /><path d="M5 9.200q-1.200-.8-2.200 0L.8 11q-1 1 0 2L27 36V26z" fill="#1a86cc" />
    <path d="M27 0l9 4.500v27L27 36z" fill="#2aa6f2" />
  </svg>
);
const Firefox = () => (
  <svg width="34" height="36" viewBox="0 0 34 36">
    <defs><linearGradient id="ff" x1=".8" y1="0" x2=".3" y2="1"><stop offset="0" stopColor="#fff14a" /><stop offset=".4" stopColor="#ff9a1c" /><stop offset=".75" stopColor="#ff4b3a" /><stop offset="1" stopColor="#e3126f" /></linearGradient></defs>
    <path d="M6 6c2 2 3 3 5 3 2 0 4-1 6-1 0-4 2-6 4-8 1 5 8 7 9 12l1-2c3 4 4 12 1 17A17 17 0 0 1 1 24C-1 16 3 12 3 8l2 3z" fill="url(#ff)" />
    <circle cx="17" cy="18.500" r="7.500" fill="#7b3fd6" /><path d="M7 15c4-4 10 1 13 1-2 4-6 1-9 3 0 5 8 7 13 1-1 8-16 9-17-5z" fill="#ff8a1f" />
  </svg>
);
const Outlook = () => (
  <svg width="36" height="32" viewBox="0 0 36 32">
    <path d="M7 9L21 1l14 8v18q0 4-4 4H10q-3 0-3-4z" fill="#1684d8" /><path d="M7 9L21 1l8 5L12 15z" fill="#3cc1ee" /><path d="M14 16L30 5l6 4v5L18 25z" fill="#0b3f91" /><path d="M18 24l18-12v15q0 4-4 4H12z" fill="#45d3f7" />
    <rect x="0" y="7" width="18" height="17" rx="2" fill="#0a6fca" /><ellipse cx="9" cy="15.500" rx="3.800" ry="4.200" fill="none" stroke="#fff" strokeWidth="2.200" />
  </svg>
);
const Edge = () => (
  <svg width="36" height="36" viewBox="0 0 36 36">
    <defs><linearGradient id="eg" x1="0" y1=".5" x2="1" y2=".4"><stop offset="0" stopColor="#1b93d6" /><stop offset=".5" stopColor="#2fc0d8" /><stop offset="1" stopColor="#66e05a" /></linearGradient></defs>
    <path d="M0 17C1 7 9 0 18 0c11 0 18 8 18 16 0 5-4 8-8 8-6 0-7-2-6-3 2-2 1-8-5-9C9 11 2 14 0 20z" fill="url(#eg)" />
    <path d="M0 18c2-6 10-8 15-5-6 3-6 19 8 20-3 2-6 3-9 2.500C5 34 0 27 0 18z" fill="#0f72c9" />
    <path d="M14 15c-5 7 1 15 10 14 4 0 7-2 8.500-2C29 34 20 37 14 35.500 6 30 7 18 14 15z" fill="#124f9c" />
  </svg>
);
const Copilot = () => (
  <svg width="36" height="34" viewBox="0 0 36 34">
    <defs><linearGradient id="c1" x1="0" y1="0" x2="0" y2="1"><stop offset="0" stopColor="#1a8ee8" /><stop offset=".5" stopColor="#2fae8a" /><stop offset="1" stopColor="#f5c912" /></linearGradient>
      <linearGradient id="c2" x1="1" y1="0" x2="0" y2="1"><stop offset="0" stopColor="#a14be8" /><stop offset=".5" stopColor="#f0539b" /><stop offset="1" stopColor="#fb9a3a" /></linearGradient></defs>
    <path d="M9 1h14q3 0 4 4l1 4h-6q-3 0-4 4l-3 10q-1 2-4 2H5q-6 0-4-7L5 5q1-4 4-4z" fill="url(#c1)" />
    <path d="M18 1h5q3 0 4 4l1 4h-6q-2-1-3-5z" fill="#1648c4" />
    <path d="M27 33H14q-3 0-4-4l-1-4h5q3 0 4-4l3-9q1-3 4-3h6q6 0 4 7l-4 13q-1 4-4 4z" fill="url(#c2)" />
  </svg>
);
const Folder = () => (
  <svg width="36" height="33" viewBox="0 0 36 33"><path d="M0 2q0-2 2-2h11l3 4v5H0z" fill="#dca100" /><path d="M0 6h12l3-2.500h19q2 0 2 2V33H0z" fill="#fdc937" /><path d="M6 33V26q0-4 4-4h16q4 0 4 4v7z" fill="#0f72c9" /><path d="M11 27.500h14" stroke="#0b4f96" strokeWidth="1.500" /></svg>
);
const Castle = () => (
  <svg width="74" height="40" viewBox="0 0 74 40">
    <path d="M3 26L10 17l6 7 8-9 9 9 22-9 12 12z" fill="#b3c4da" />
    <path d="M0 29q36-8 74 1-6 5-8 6-20 6-46 1Q2 34 0 29z" fill="#2bb3e2" /><path d="M12 34q25 6 50-1-5 7-26 6-18-1-24-5z" fill="#7fe3e6" />
    <path d="M18 28V17l4-4 3 6 6-1V11h5v8l6-4V10l4-3 3-5 3 5v8l4 4v10z" fill="#a98f5a" /><path d="M46 8l3-6 3 5v20h-6zM26 18h4v9h-4z" fill="#6f5a38" />
    <path d="M11 31l8-7 12 3 10-4 14 2 10 7q-12 4-24 2-20 3-30-3z" fill="#a58375" /><path d="M16 33l8-5 8 5zM40 33l8-6 10 6z" fill="#caa18f" />
    <path d="M17 .5h3M28 .5h14M50 .5h6" stroke="#e5b548" />
  </svg>
);

const MobileMark = styled.div`
  width: 58px;
  padding: 7px 0 0 39px;
`;
const PagerMark = styled.div`
  padding: 20px 0 0 31px;
`;
const BrushMark = styled.div`
  padding-top: 5px;
`;
const MoreMark = styled.div`
  padding: 16px 0 0 18px;
`;

export default function App() {
  return (
    <Screen>
      <Global />
      <TitleBar>
        <QuickIcons>
          <svg width="24" height="24" viewBox="0 0 24 24" fill="none" stroke="#f3f2f1" strokeWidth="1.500"><path d="M1 1h22v22H4l-3-3zM6 1v10h12V1M7 23v-8h9v8M10 18v5" /></svg>
          <svg width="22" height="24" viewBox="0 0 22 24" fill="none" stroke="#e1dfdd" strokeWidth="1.600"><path d="M1 1v9h9M1.500 9.500C8 1 12 1 15 2c6 2 6 9 3 12L9 23" /></svg>
          <svg width="22" height="24" viewBox="0 0 22 24" fill="none" stroke="#6d6b68" strokeWidth="1.600"><path d="M21 1v9h-9M20.500 9.500C14 1 10 1 7 2c-6 2-6 9-3 12l9 9" /></svg>
        </QuickIcons>
        <Label $w={60} $size={19} $dy={5} dir="rtl">مواضيع</Label>
        <Label $w={19} $size={17} $dy={6} $ml={4}>•</Label>
        <Label $w={236} $size={17} $dy={6} $ls={-0.070} $ml={-4}>Last saved: Today at 9:34 PM</Label>
        <svg width="14" height="8" viewBox="0 0 14 8"><path d="M0 0h14L7 8z" fill="#fff" /></svg>
        <TitleSearch><Magnifier c="#323130" /><Label $size={20} $dy={3}>Search</Label></TitleSearch>
        <Label $ml={239} $w={71} $size={17} $dy={2}>Sign in</Label>
        <svg width="30" height="30" viewBox="0 0 30 30" fill="none" stroke="#fff" strokeWidth="2"><circle cx="15" cy="15" r="13.500" /><circle cx="15" cy="10.500" r="3.800" /><path d="M8.500 17.500h13c0 4-3 6-6.500 6s-6.500-2-6.500-6z" /></svg>
        <WindowButtons>
          <svg width="15" height="15" stroke="#fff" strokeWidth="1.500"><path d="M0 9h15" /></svg>
          <svg width="15" height="16" viewBox="0 0 15 16" fill="none" stroke="#fff" strokeWidth="1.500"><rect x="1" y="4.500" width="11" height="11" rx="2" /><path d="M4 4.500V3.500Q4 1.500 6 1.500H12.500Q14.500 1.500 14.500 3.500V10Q14.500 12 12.500 12" /></svg>
          <svg width="15" height="15" stroke="#fff" strokeWidth="1.500"><path d="M1 2l13 13M14 2L1 15" /></svg>
        </WindowButtons>
      </TitleBar>

      <Ribbon>
        <TabRow>
          <Tab $w={33} $gap={56} $bold $ls={-0.300}>File</Tab>
          <Tab $w={56} $gap={48}>Home</Tab>
          <Tab $w={51} $gap={48} $ls={-0.100}>Insert</Tab>
          <Tab $w={88} $gap={47} $ls={0.350}>Modeling</Tab>
          <Tab $w={46} $gap={46} $active $ls={-0.200}>View</Tab>
          <Tab $w={85} $gap={47} $ls={0.300}>Optimize</Tab>
          <Tab $w={44} $gap={0}>Help</Tab>
          <Share>
            <svg width="24" height="22" viewBox="0 0 24 22" fill="none" stroke="#fff" strokeWidth="1.700"><path d="M10 4H3.500Q1.500 4 1.500 6v12q0 2 2 2h14q2 0 2-2v-4" /><path d="M14 1.500l8 6.500-8 6.500V11c-4 0-6 1-8 4 0-5 3-9 8-9.500z" strokeLinejoin="round" /></svg>
            Share <Down s={15} c="#fff" w={1.100} />
          </Share>
        </TabRow>
        <Groups>
          <Group $w={735}>
            <GroupBody $pad="12px 0 0 12px">
              <Gallery>
                {themes.map(([ink, cs], i) => (
                  <ThemeCard key={i} $ink={ink}>Aa<MiniBars>{cs.map((c, j) => <MiniBar key={j} $h={barHeights[j]} $c={c} />)}</MiniBars></ThemeCard>
                ))}
                <GalleryMore><Down /></GalleryMore>
              </Gallery>
            </GroupBody>
            <GroupName>Themes</GroupName>
          </Group>
          <Group $w={95}>
            <GroupBody>
              <BigButton $w={94}>
                <svg width="42" height="42" viewBox="0 0 42 42" fill="none" stroke={K} strokeWidth="1.800"><rect x="11" y="11" width="30" height="30" fill="#fafafa" /><path d="M11 0v8M41 0v8M11 4h30M0 11h7M0 41h7M3.500 11v30" /><rect x="15" y="15.500" width="21" height="5" fill="#c8c6c4" stroke="#797775" strokeWidth="1.300" /></svg>
                <span>Page</span>
                <ViewLine>view<Down s={9} /></ViewLine>
              </BigButton>
            </GroupBody>
            <GroupName>Scale to fit</GroupName>
          </Group>
          <Group $w={85}>
            <GroupBody>
              <BigButton $w={83}>
                <svg width="26" height="42" viewBox="0 0 26 42" fill="none" stroke={K} strokeWidth="1.800"><rect x="1" y="1" width="24" height="40" rx="2" fill="#fafafa" /><path d="M9 36.500h8" /></svg>
                <span>Mobile</span><span>layout</span>
              </BigButton>
            </GroupBody>
            <GroupName>Mobile</GroupName>
          </Group>
          <Group $w={182}>
            <GroupBody>
              <CheckList><CheckRow>Gridlines</CheckRow><CheckRow>Snap to grid</CheckRow><CheckRow>Lock objects</CheckRow></CheckList>
            </GroupBody>
            <GroupName>Page options</GroupName>
          </Group>
          <Group $w={420}>
            <GroupBody $pad="4px 0 0 12px">
              <BigButton $w={60} $active><Funnel w={42} h={42} sw={1.800} fill="#fafafa" /><span>Filters</span></BigButton>
              <BigButton $w={92}>
                <svg width="26" height="42" viewBox="0 0 26 42" fill="#fafafa" stroke={K} strokeWidth="1.800"><path d="M1 1h24v39L13 31 1 40z" /></svg><span>Bookmarks</span>
              </BigButton>
              <BigButton $w={78}>
                <svg width="44" height="49" viewBox="0 0 44 49"><rect x="15" y="1" width="27" height="27" fill="#f9da93" stroke="#e07b1a" strokeWidth="1.600" /><rect x="1" y="20" width="26" height="21" fill="#fafafa" stroke={K} strokeWidth="1.800" /><path d="M26 17v24l5-5 4 9 4-2-4-8h7z" fill="#fff" stroke={K} strokeWidth="1.600" /></svg>
                <Caption>Selection</Caption>
              </BigButton>
              <BigButton $w={106}>
                <svg width="42" height="49" viewBox="0 0 42 49" fill="none"><path d="M33 20V1H1v40h17" stroke={K} strokeWidth="1.800" /><path d="M18 34H9V17h7v17M16 17V9h7v14" stroke="#797775" strokeWidth="1.500" /><circle cx="31" cy="34" r="9.800" fill="#fafafa" stroke="#2b88d8" strokeWidth="2" /><path d="M31 28v6h4M28 21.500h6M31 22v2M38.500 24l2 2" stroke="#2b88d8" strokeWidth="2" /></svg>
                <Caption>Performance</Caption><span>analyzer</span>
              </BigButton>
              <BigButton $w={59}>
                <svg width="48" height="49" viewBox="0 2 48 49" fill="none"><path d="M24 4h20v20M24 8h20M4 26v17h27M20 22h18M20 17h18v5" stroke={K} strokeWidth="1.600" /><path d="M25 3.500h19v5H25z" fill="#c8c6c4" /><path d="M24 29h-14v8h19" stroke="#797775" strokeWidth="1.500" /><path d="M27 27h21v3L40.500 38v8h-6v-8L27 30z" fill="#fafafa" stroke={K} strokeWidth="1.800" /><path d="M1 11C2 5 6 2 11 2c5 0 9 3 11 7M22 1v8h-7M22 14c-1 6-5 9-10 9-5 0-9-3-11-7M1 24v-8h7" stroke="#3f9150" strokeWidth="2.200" /></svg>
                <Caption>Sync</Caption><span>slicers</span>
              </BigButton>
            </GroupBody>
            <GroupName>Show panes</GroupName>
          </Group>
          <CollapseSlot><svg width="14" height="9" viewBox="0 0 14 9" fill="none" stroke="#323130" strokeWidth="2"><path d="M1 8l6-6 6 6" /></svg></CollapseSlot>
        </Groups>
      </Ribbon>

      <Work>
        <Rail>
          <RailItem $active><svg width="22" height="22" viewBox="0 0 22 22" fill="none" stroke="#1b1a19" strokeWidth="1.700"><path d="M1 1v19.500h20M4.500 6h3v11h-3zM10 9h3v8h-3zM15.500 3h3.500v14h-3.500z" /></svg></RailItem>
          <RailItem><svg width="24" height="22" viewBox="0 0 24 22" fill="none" stroke="#797775" strokeWidth="1.400"><path d="M1 1h22v20H1zM1 4h22M1 9.500h22M1 15h22M8.500 4v17M16 4v17" /></svg></RailItem>
          <RailItem><svg width="28" height="28" viewBox="0 0 28 28" fill="none" stroke="#797775" strokeWidth="1.400"><path d="M1 9h11v11H1zM1 13h11M16 1h11v11H16zM16 5h11M16 16h11v11H16zM16 20h11M7 9V4h9M7 20v5h9" /></svg></RailItem>
          <RailItem>
            <svg width="28" height="26" viewBox="0 0 28 26" fill="none" stroke="#797775" strokeWidth="1.500"><path d="M7 16V3q0-2 2-2h8l5 6v10M16 1v7h6M25.500 9v10q0 4-3 6" /><text x="-1" y="25" fontSize="10" fontWeight="600" fill="#797775" stroke="none">DAX</text></svg>
          </RailItem>
        </Rail>

        <Center>
          <CenterTop>
            <Canvas>
              <Report>
                <Visual $x={76} $y={262} $w={236} $h={176}><VisualTitle $ls={0.260}>Sum of Units Sold by Retailer</VisualTitle><BarChart /></Visual>
                <Visual $x={322} $y={262} $w={518} $h={176}><VisualTitle $ls={0.250}>Count of Beverage Brand by Year, Quarter, Month, Day and Delivery Company</VisualTitle><LineChart /></Visual>
                <Visual $x={847} $y={262} $w={239} $h={176}>
                  <SlicerBody><SlicerTitle $size={11.500} $h={16}>Retailer ID</SlicerTitle><Dropdown>All<Down s={11} c="#797775" w={1} /></Dropdown></SlicerBody>
                </Visual>
                <Visual $x={98} $y={459} $w={422} $h={215}><VisualTitle $ls={0.150}>Sum of Total Sales</VisualTitle><Gauge /></Visual>
                <Visual $x={581} $y={511} $w={391} $h={108}>
                  <SlicerBody>
                    <SlicerTitle $size={8.600} $h={15}>Invoice Date</SlicerTitle>
                    <DateRow><DateBox>02/01/22<Calendar /></DateBox><DateBox>25/12/22<Calendar /></DateBox></DateRow>
                    <Slider><Knob /><Track /><Knob /></Slider>
                  </SlicerBody>
                </Visual>
                <Visual $x={98} $y={684} $w={261} $h={128}>
                  <Table>
                    <TRow $kind="head"><span>Retailer</span><span>Sum of Total Sales</span><span>Sum of Units Sold</span></TRow>
                    {rows.map((r, i) => <TRow key={r[0]} $kind={i % 2 ? "alt" : undefined}><span>{r[0]}</span><span>{r[1]}</span><span>{r[2]}</span></TRow>)}
                    <TRow $kind="total"><span>Total</span><span>8,215,165.00</span><span>16482500</span></TRow>
                  </Table>
                </Visual>
                {cards.map(([x, y, l, v]) => (
                  <Visual key={l} $x={x} $y={y} $w={215} $h={118}><CardFrame><CardLabel>{l}</CardLabel><CardValue>{v}</CardValue></CardFrame></Visual>
                ))}
              </Report>
            </Canvas>
            <FiltersPane>
              <PaneHead $pad="0 14px 2px 17px">
                <Funnel w={26} h={24} sw={3} />
                <Label $size={21.500} $weight={600} $ml={11} $ls={0.200}>Filters</Label>
                <Push>
                  <svg width="20" height="14" viewBox="0 0 20 14" fill="none" stroke="#323130" strokeWidth="1.800"><path d="M1 9C2 4 5 1.500 10 1.500S18 4 19 9" /><circle cx="10" cy="9" r="3" /></svg>
                  <DoubleChevron />
                </Push>
              </PaneHead>
              <FilterTop><FilterSearch><Magnifier /><Label $size={18}>Search</Label></FilterSearch></FilterTop>
              {["Filters on this page", "Filters on all pages"].map(t => (
                <FilterSection key={t}>
                  <FilterHead><Label $size={17}>{t}</Label><svg width="18" height="3" fill="#323130"><path d="M0 4h2v2H0zM8 4h2v2H8zM16 4h2v2h-2z" /></svg></FilterHead>
                  <DropWell><Label $size={17}>Add data fields here</Label></DropWell>
                </FilterSection>
              ))}
            </FiltersPane>
          </CenterTop>
          <PageBar>
            <ViewSwitch>
              <DesktopTab><svg width="28" height="22" viewBox="0 0 28 22" fill="none" stroke="#605e5c" strokeWidth="1.800"><path d="M1 1h26v15H1zM14 16v4M9 20.500h10" /></svg></DesktopTab>
              <MobileMark><svg width="19" height="30" viewBox="0 0 19 30" fill="none" stroke="#605e5c" strokeWidth="1.800"><rect x="1" y="1" width="17" height="28" rx="1.500" /><path d="M7.500 25h4" /></svg></MobileMark>
              <PagerMark><svg width="41" height="12" viewBox="0 0 41 12" fill="#c8c6c4"><path d="M7 0v12L0 6zM34 0v12l7-6z" /></svg></PagerMark>
            </ViewSwitch>
            <PageTab>Page ١</PageTab>
            <AddPage><svg width="17" height="17" viewBox="0 0 17 17" stroke="#fff" strokeWidth="4.500"><path d="M8.500 0v17M0 8.500h17" /></svg></AddPage>
          </PageBar>
        </Center>

        <VizPane>
          <PaneHead $pad="0 10px 2px 12px"><Label $size={21.500} $weight={600} $ls={0.350}>Visualizations</Label><Push><DoubleChevron /></Push></PaneHead>
          <BuildTitle>Build visual</BuildTitle>
          <BuildRow>
            <BuildButton>
              <svg width="36" height="36" viewBox="0 0 36 36"><path d="M0 1h28" stroke="#252423" strokeWidth="2" /><rect x="1" y="8" width="34" height="11" fill={TEAL} stroke="#1b1a19" strokeWidth="1.800" strokeDasharray="2 1.500" /><rect x="1" y="24.500" width="34" height="11" fill={TEAL} stroke="#1b1a19" strokeWidth="1.800" strokeDasharray="2 1.500" /></svg>
            </BuildButton>
            <BrushMark><svg width="38" height="38" viewBox="0 0 38 38" fill="none" stroke="#323130" strokeWidth="1.800"><path d="M8 36H1V1h16l9 10v4M17 1v11h9" /><path d="M36 14q2 2-1 6L24 31l-4-4 12-11q3-3 4-2zM20 27c-4-1-7 2-7 5 0 2-2 3-4 3 6 3 14 1 15-4z" fill="#f3f2f1" /></svg></BrushMark>
          </BuildRow>
          <svg width="269" height="14" viewBox="0 0 269 14" fill="none" stroke="#8a8886" strokeWidth="1.500"><path d="M0 12.500H24L36 1l12 11.500H269" /></svg>
          <IconGrid>{vizIcons.map((n, i) => <svg key={i} width="28" height="28" viewBox="0 0 28 28">{n}</svg>)}</IconGrid>
          <MoreMark><svg width="30" height="20" fill="#323130"><path d="M0 7h2.500v2.500H0zM10 7h2.500v2.500H10zM19 7h2.500v2.500h-2.500z" /></svg></MoreMark>
          <Wells>
            <WellsBody>
              <Label $size={17} $ml={12} $color="#3b3a39">Values</Label>
              <ValueDrop><Label $size={17} $color="#3b3a39">Add data fields here</Label></ValueDrop>
              <Label $size={17} $ml={12} $weight={600} $dy={16} $color="#484644">Drill through</Label>
              <OptionRow $mt={5}><Label $ls={0.050}>Cross-report</Label><Toggle><i />Off</Toggle></OptionRow>
              <OptionRow><Label>Keep all filters</Label><Toggle $on><i />On</Toggle></OptionRow>
            </WellsBody>
            <Scroll $w={9} $h={171} $top={4} $round $c="#d2d0ce" />
          </Wells>
        </VizPane>

        <DataPane>
          <PaneHead $pad="0 11px 2px 13px"><Label $size={21.500} $weight={600} $ls={0.200}>Data</Label><Push><DoubleChevron /></Push></PaneHead>
          <DataSearch><MagnifierR c="#616161" s={22} w={1.500} /><Label $size={18} $dy={1} $color="#707070">Search</Label></DataSearch>
          <FieldArea>
            <FieldList>
              <Remnant><svg width="12" height="4" fill="none" stroke="#252423" strokeWidth="1.600"><path d="M0 3h11M2 2l2-1" /></svg></Remnant>
              {fields.map(([k, n]) => (
                <Field key={n}>
                  <Expander>{k === "d" && <svg width="10" height="17" viewBox="0 0 10 17" fill="none" stroke="#484644" strokeWidth="1.300"><path d="M1 1l8 7.500L1 16" /></svg>}</Expander>
                  <Box />{fieldIcon[k] || <i />}<span>{n}</span>
                </Field>
              ))}
            </FieldList>
            <Scroll $w={12} $h={459} $top={105} $c="#c8c8c8" />
          </FieldArea>
        </DataPane>
      </Work>

      <Status>
        <Label $size={17} $ls={-0.600}>Page ١ of ١</Label>
        <ZoomGroup>
          <svg width="180" height="18" viewBox="0 0 180 18" stroke="#605e5c" fill="none"><path d="M-3 9.500h6M168 8.500h11M173.500 3v11" strokeWidth="2" /><path d="M10 8.500H160M85 4.500v8" strokeWidth="1.300" /><path d="M45.500 0v17" strokeWidth="6" /></svg>
          <Label $size={17} $w={43} $ls={-1}>٥٣%</Label>
          <svg width="24" height="18" viewBox="0 0 24 18" fill="none" stroke="#605e5c" strokeWidth="1.700"><path d="M1 1h22v16H1zM4 7V4h4M16 4h4v3M20 11v3h-4M8 14H4v-3" /></svg>
        </ZoomGroup>
      </Status>

      <Taskbar>
        <Slot $w={65} $pl={32}><svg width="20" height="24" viewBox="0 0 20 24" fill="#003e92"><path d="M10 0c5 0 7.500 4 7.500 8v6l2.500 5H0l2.500-5V8C2.500 4 5 0 10 0zM6 21h8q-1 3-4 3t-4-3z" /></svg></Slot>
        <Slot $w={90}><Clock><div>٠٩:٣٤ م</div><div>٤٦/٠٥/٢٩</div></Clock></Slot>
        <Slot $w={35}><svg width="25" height="16" viewBox="0 0 25 16" fill="none" stroke="#1a1a1a" strokeWidth="1.600"><rect x="1" y="1" width="20" height="14" rx="3.500" /><rect x="4" y="4" width="10" height="8" fill="#1a1a1a" /><path d="M23.500 5.500v5" strokeWidth="2.500" /></svg></Slot>
        <Slot $w={37}><svg width="24" height="18" viewBox="0 0 24 18" fill="none" stroke="#1a1a1a" strokeWidth="1.500"><path d="M1 6h4l5-5v16l-5-5H1zM14.500 5.500l8 7M22.500 5.500l-8 7" /></svg></Slot>
        <Slot $w={64}><svg width="24" height="18" viewBox="0 0 24 18" fill="none" stroke="#1a1a1a" strokeWidth="1.700"><path d="M1 6Q12-4 23 6" stroke="#a9b6c5" /><path d="M4 9.500q8-7 16 0M7.500 13q4.500-4 9 0" /><circle cx="12" cy="15.500" r="1.300" fill="#1a1a1a" /></svg></Slot>
        <Slot $w={50}><Label $size={18}>ع</Label></Slot>
        <Slot $w={52}><svg width="21" height="24" viewBox="0 0 21 24" fill="none" stroke="#0a4aa0" strokeWidth="1.700"><path d="M20 1L1 12l10 2.500 5 8.500z" /></svg></Slot>
        <Slot $w={124}><svg width="16" height="9" viewBox="0 0 16 9" fill="none" stroke="#1a1a1a" strokeWidth="1.900"><path d="M1 8l7-7 7 7" /></svg></Slot>
        <AppButton>
          <Label $size={18.500} $w={58} $dy={5} dir="rtl">مواضيع</Label>
          <AppMark $c="#0078d4" $w={24} $t={6}>
            <svg width="28" height="36" viewBox="0 0 28 36"><defs><linearGradient id="pb" x1="0" y1="0" x2="1" y2="1"><stop offset="0" stopColor="#e8b01c" /><stop offset="1" stopColor="#b9730f" /></linearGradient></defs><rect x="15" width="13" height="36" rx="1.500" fill="url(#pb)" /><rect x="8" y="9" width="12" height="27" rx="1.500" fill="#efc42f" /><rect y="18" width="12" height="18" rx="1.500" fill="#f7e070" /></svg>
          </AppMark>
        </AppButton>
        <Slot $w={193} $pl={19}><Label $size={17} $ls={0.080}>Project of CIT495.pd</Label></Slot>
        <Slot $w={66}><AppMark $c="#7d838f" $w={9} $t={6} $mt={11}><Chrome /></AppMark></Slot>
        <Slot $w={67}><VsCode /></Slot>
        <Slot $w={65}><Firefox /></Slot>
        <Slot $w={66}><Outlook /></Slot>
        <Slot $w={66}><Edge /></Slot>
        <Slot $w={66}><Copilot /></Slot>
        <Slot $w={66}><Folder /></Slot>
        <Slot $w={56}><svg width="36" height="34" viewBox="0 0 36 34"><rect x="9" y="9" width="27" height="25" rx="2" fill="#2b2b2b" /><rect width="27" height="25" rx="2" fill="#f3f3f3" opacity=".95" /><path d="M9 9h18v16H9z" fill="#a6a6a6" /></svg></Slot>
        <SearchPill>
          <Castle />
          <Label $size={19} $ml={156} $w={54} $color="#5c5c5c" dir="ltr">بحث</Label>
          <MagnifierR c="#1a1a1a" s={22} w={2.200} />
        </SearchPill>
        <Slot $w={175} $pl={22}><svg width="35" height="35" viewBox="0 0 35 35"><defs><linearGradient id="wn" x1="0" y1="0" x2="1" y2="1"><stop offset="0" stopColor="#29b1f0" /><stop offset="1" stopColor="#0067c0" /></linearGradient></defs><path d="M0 0h17v17H0zM18 0h17v17H18zM0 18h17v17H0zM18 18h17v17H18z" fill="url(#wn)" /></svg></Slot>
        <Weather>
          <svg width="36" height="36" viewBox="0 0 36 36"><path d="M13 0c10 4 9 18-3 19-4 1-8-1-10-4 8-1 12-7 13-15z" fill="#f2a526" /><path d="M9 35Q1 34 0 28q0-6 7-7 3-9 12-8 8 1 9 8 8 1 8 7-1 6-8 7z" fill="#8fb2ef" /><path d="M9 35Q1 34 0 28q15 4 36 0-1 6-8 7z" fill="#6c96e6" /></svg>
          <Badge>1</Badge>
        </Weather>
      </Taskbar>
    </Screen>
  );
}

const Caption = styled.span`
  margin-top: -7px;
`;
